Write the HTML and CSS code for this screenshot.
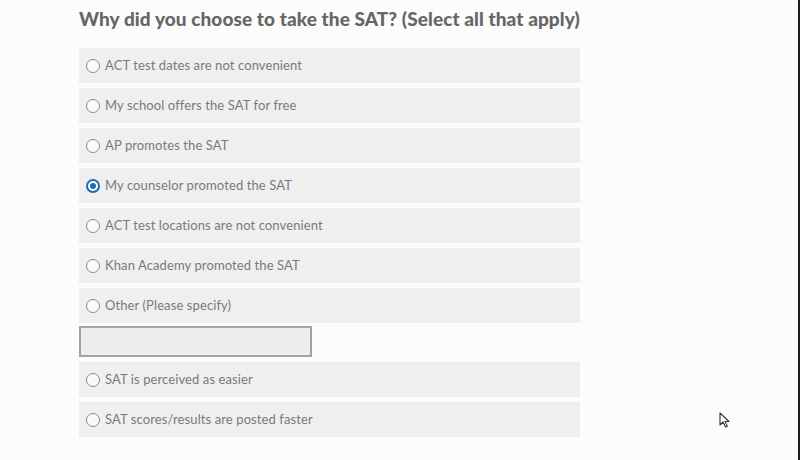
FILE: index.html
```html
<!DOCTYPE html>
<html>
<head>
<meta charset="utf-8">
<link rel="stylesheet" href="styles.css">
</head>
<body>
<div class="page">
  <form class="survey">
    <h1 class="question">Why did you choose to take the SAT? (Select all that apply)</h1>
    <div class="options">
      <label class="option"><span class="radio"></span><span class="label">ACT test dates are not convenient</span></label>
      <label class="option"><span class="radio"></span><span class="label">My school offers the SAT for free</span></label>
      <label class="option"><span class="radio"></span><span class="label">AP promotes the SAT</span></label>
      <label class="option"><span class="radio checked"></span><span class="label">My counselor promoted the SAT</span></label>
      <label class="option"><span class="radio"></span><span class="label">ACT test locations are not convenient</span></label>
      <label class="option"><span class="radio"></span><span class="label">Khan Academy promoted the SAT</span></label>
      <label class="option"><span class="radio"></span><span class="label">Other (Please specify)</span></label>
      <div class="other-box"></div>
      <label class="option"><span class="radio"></span><span class="label">SAT is perceived as easier</span></label>
      <label class="option"><span class="radio"></span><span class="label">SAT scores/results are posted faster</span></label>
    </div>
  </form>
  <svg class="cursor" width="12" height="18" viewBox="0 0 12 18"><path d="M1 1 L1 13 L4 10 L6.5 15 L8.3 14.2 L6 9.5 L10 9.5 Z" fill="#fff" stroke="#333" stroke-width="1.1" stroke-linejoin="round"/></svg>
</div>
</body>
</html>
```
FILE: styles.css
```css
html, body {
  margin: 0;
  padding: 0;
  background: #fcfcfc;
}
.page {
  position: relative;
  width: 798px;
  height: 460px;
  border-right: 2px solid #1c1c1c;
  font-family: "Lato", "Open Sans", sans-serif;
}
.survey {
  padding: 6px 0 0 79px;
  width: 501px;
}
.question {
  margin: 0 0 16px 0;
  font-family: "Lato", sans-serif;
  font-weight: 900;
  font-size: 19px;
  line-height: 26px;
  letter-spacing: 0.08px;
  color: #666;
  white-space: nowrap;
}
.options {
  display: flex;
  flex-direction: column;
  gap: 5px;
}
.option {
  display: flex;
  align-items: center;
  height: 35px;
  background: #efefef;
  padding-left: 7px;
}
.radio {
  box-sizing: border-box;
  width: 14px;
  height: 14px;
  border: 1.5px solid #8a8a8a;
  border-radius: 50%;
  background: #fafafa;
  margin-right: 5px;
  position: relative;
}
.radio.checked {
  border: 2px solid #1b6eb3;
  background: #fff;
}
.radio.checked::after {
  content: "";
  position: absolute;
  left: 2px;
  top: 2px;
  width: 6px;
  height: 6px;
  border-radius: 50%;
  background: #1b6eb3;
}
.label {
  font-size: 13px;
  line-height: 16px;
  margin-top: -1px;
  color: #7a7a7a;
  letter-spacing: 0.1px;
}
.other-box {
  box-sizing: border-box;
  width: 233px;
  height: 31px;
  border: 2px solid #a3a3a3;
  background: #eeeeee;
  margin: -2px 0 0 0;
}
.cursor {
  position: absolute;
  left: 719px;
  top: 412px;
}
```
